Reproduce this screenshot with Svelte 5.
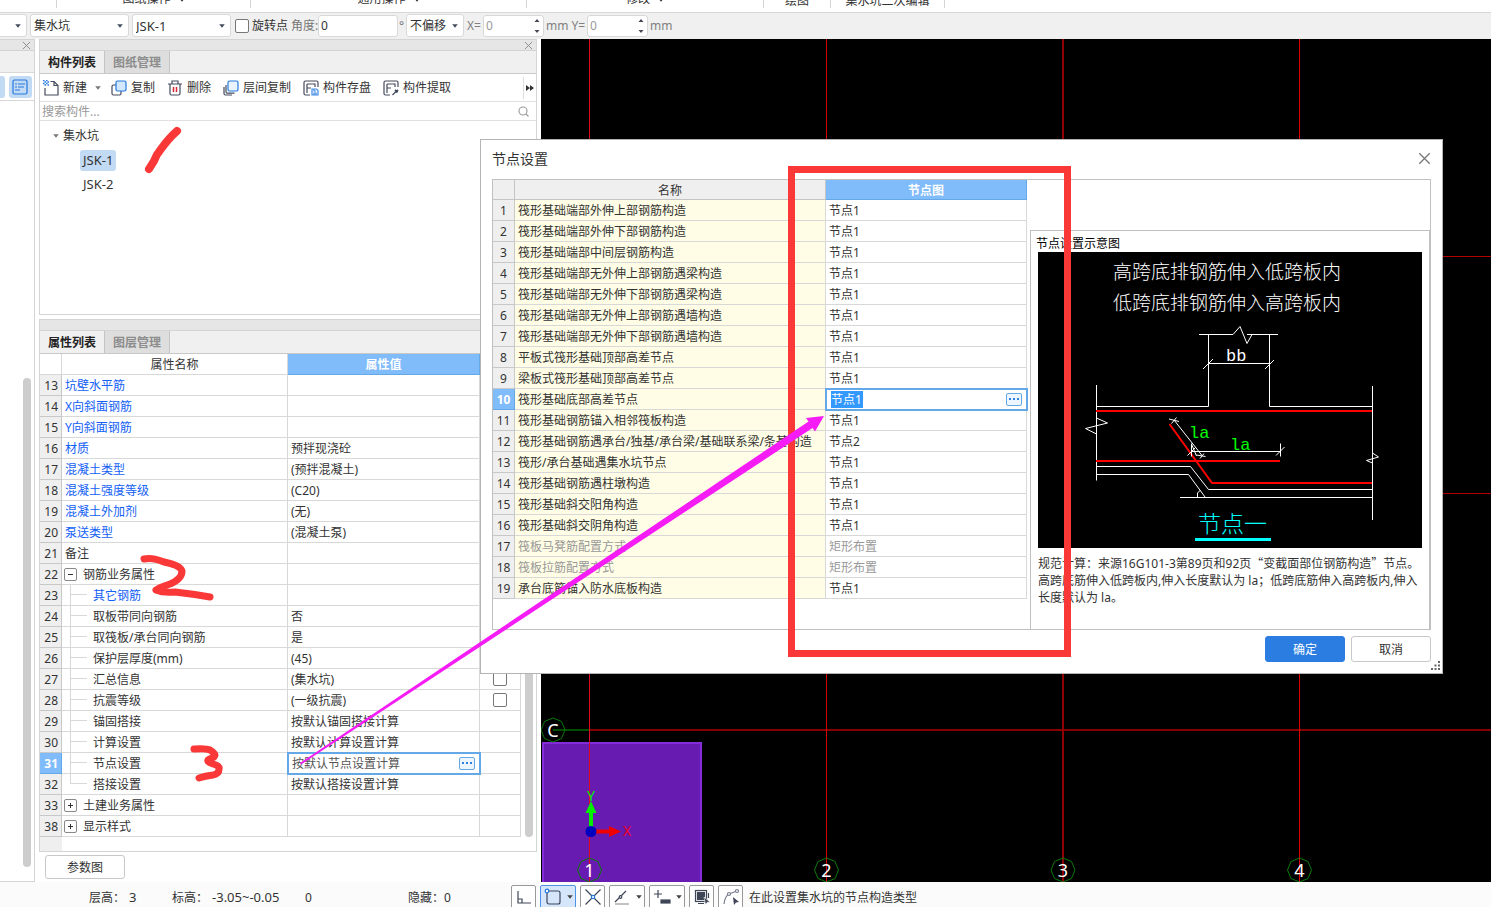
<script>
  const ribbon = [
    { text: '', width: 57 },
    { text: '图纸操作', width: 194, menu: true },
    { text: '通用操作', width: 276, menu: true },
    { text: '修改', width: 237, menu: true },
    { text: '绘图', width: 67 },
    { text: '集水坑二次编辑', width: 114 }
  ];

  const properties = [
    { no: 13, name: '坑壁水平筋', blue: true },
    { no: 14, name: 'X向斜面钢筋', blue: true },
    { no: 15, name: 'Y向斜面钢筋', blue: true },
    { no: 16, name: '材质', value: '预拌现浇砼', blue: true },
    { no: 17, name: '混凝土类型', value: '(预拌混凝土)', blue: true },
    { no: 18, name: '混凝土强度等级', value: '(C20)', blue: true },
    { no: 19, name: '混凝土外加剂', value: '(无)', blue: true },
    { no: 20, name: '泵送类型', value: '(混凝土泵)', blue: true },
    { no: 21, name: '备注' },
    { no: 22, name: '钢筋业务属性', group: '−' },
    { no: 23, name: '其它钢筋', blue: true, child: true },
    { no: 24, name: '取板带同向钢筋', value: '否', child: true },
    { no: 25, name: '取筏板/承台同向钢筋', value: '是', child: true },
    { no: 26, name: '保护层厚度(mm)', value: '(45)', child: true },
    { no: 27, name: '汇总信息', value: '(集水坑)', child: true, check: true },
    { no: 28, name: '抗震等级', value: '(一级抗震)', child: true, check: true },
    { no: 29, name: '锚固搭接', value: '按默认锚固搭接计算', child: true },
    { no: 30, name: '计算设置', value: '按默认计算设置计算', child: true },
    { no: 31, name: '节点设置', value: '按默认节点设置计算', child: true, active: true },
    { no: 32, name: '搭接设置', value: '按默认搭接设置计算', child: true, last: true },
    { no: 33, name: '土建业务属性', group: '+' },
    { no: 38, name: '显示样式', group: '+' }
  ];

  const nodes = [
    ['筏形基础端部外伸上部钢筋构造', '节点1'],
    ['筏形基础端部外伸下部钢筋构造', '节点1'],
    ['筏形基础端部中间层钢筋构造', '节点1'],
    ['筏形基础端部无外伸上部钢筋遇梁构造', '节点1'],
    ['筏形基础端部无外伸下部钢筋遇梁构造', '节点1'],
    ['筏形基础端部无外伸上部钢筋遇墙构造', '节点1'],
    ['筏形基础端部无外伸下部钢筋遇墙构造', '节点1'],
    ['平板式筏形基础顶部高差节点', '节点1'],
    ['梁板式筏形基础顶部高差节点', '节点1'],
    ['筏形基础底部高差节点', '节点1'],
    ['筏形基础钢筋锚入相邻筏板构造', '节点1'],
    ['筏形基础钢筋遇承台/独基/承台梁/基础联系梁/条基构造', '节点2'],
    ['筏形/承台基础遇集水坑节点', '节点1'],
    ['筏形基础钢筋遇柱墩构造', '节点1'],
    ['筏形基础斜交阳角构造', '节点1'],
    ['筏形基础斜交阴角构造', '节点1'],
    ['筏板马凳筋配置方式', '矩形布置'],
    ['筏板拉筋配置方式', '矩形布置'],
    ['承台底筋锚入防水底板构造', '节点1']
  ];

  const axes = [
    { x: 48.5, color: '#e00a20', width: 1 },
    { x: 285.5, color: '#d80000', width: 1 },
    { x: 522, color: '#900000', width: 2 },
    { x: 758.5, color: '#e00000', width: 1 }
  ];
</script>

{#snippet caret()}
  <svg class="caret" width="6" height="4" viewBox="0 0 6 4" aria-hidden="true"><path d="M0.200 0.200h5.600L3 3.800z" fill="currentColor" /></svg>
{/snippet}

{#snippet cross(size)}
  <svg width={size} height={size} viewBox="0 0 10 10" aria-hidden="true"><path d="M1 1l8 8M9 1l-8 8" stroke="currentColor" stroke-width="1" fill="none" /></svg>
{/snippet}

{#snippet dots()}
  <button class="more" aria-label="更多"><i></i><i></i><i></i></button>
{/snippet}

{#snippet spin()}
  <svg width="6" height="14" viewBox="0 0 6 14" aria-hidden="true"><path d="M0.500 3L3 0l2.500 3zM0.500 11h5L3 14z" fill="#444a55" /></svg>
{/snippet}

<div class="app">
  <header class="ribbon">
    {#each ribbon as g}
      <div class="ribbon-group" class:menu={g.menu} style:width="{g.width}px">
        <span>{g.text}</span>
        {#if g.menu}<span class="rc">{@render caret()}</span>{/if}
      </div>
    {/each}
  </header>

  <div class="toolbar">
    <label class="combo first"><select aria-label="楼层"><option></option></select>{@render caret()}</label>
    <label class="combo wide"><select aria-label="构件类型"><option>集水坑</option></select>{@render caret()}</label>
    <label class="combo wide latin"><select aria-label="构件"><option>JSK-1</option></select>{@render caret()}</label>
    <label class="tick"><input type="checkbox" />旋转点</label>
    <label class="angle"><span>角度:</span><input value="0" /></label>
    <span class="deg">°</span>
    <label class="combo offset"><select aria-label="偏移方式"><option>不偏移</option></select>{@render caret()}</label>
    <label class="num"><span>X=</span><span class="spin"><input value="0" />{@render spin()}</span><span>mm</span></label>
    <label class="num"><span>Y=</span><span class="spin"><input value="0" />{@render spin()}</span><span>mm</span></label>
  </div>

  <main>
    <aside class="strip">
      <div class="titlebar">{@render cross(9)}</div>
      <div class="strip-head"></div>
      <div class="strip-tools">
        <button class="cut" aria-label="视图"></button>
        <button aria-label="列表">
          <svg width="16" height="16" viewBox="0 0 16 16" fill="none" stroke="#2478e0" stroke-width="1.200"><rect x="1" y="1" width="14" height="14" rx="1.500" /><path d="M3 5h2M6 5h7M3 8h2M6 8h6M3 11h5" /></svg>
        </button>
      </div>
      <div class="strip-body"><div class="thumb"></div></div>
    </aside>

    <div class="dock">
      <section class="panel components">
        <div class="titlebar">{@render cross(9)}</div>
        <div class="tabs"><button class="on">构件列表</button><button>图纸管理</button></div>
        <div class="tools">
          <button>
            <svg width="16" height="16" viewBox="0 0 16 16" fill="none" stroke="#444b5c" stroke-width="1.200"><path d="M7.500 1.500h3.500l4 4v9.500H2V8M11 1.500v4h4" /><path d="M0 .5h1.500M3 .5h1.500M1.500 2H3M4.500 2H6M0 3.500h1.500M3 3.500h1.500M1.500 5H3M4.500 5H6" stroke="#2478e0" stroke-width="1.500" /></svg>
            新建
            <span class="gray">{@render caret()}</span>
          </button>
          <button>
            <svg width="16" height="16" viewBox="0 0 16 16" stroke-width="1.200"><path d="M5 5H2.500Q1 5 1 6.500v7Q1 15 2.500 15h6q1.500 0 1.500-1.500V11" fill="none" stroke="#444b5c" /><rect x="5" y="1" width="10" height="10" rx="1.500" fill="#d3e7fd" stroke="#2478e0" /></svg>
            复制
          </button>
          <button>
            <svg width="16" height="16" viewBox="0 0 16 16" fill="none" stroke="#444b5c" stroke-width="1.200"><path d="M1 4h14M5 4V1h6v3M3 4v9.500Q3 15 4.500 15h7q1.500 0 1.500-1.500V4" /><path d="M6.500 7v5M9.500 7v5" stroke="#df2530" stroke-width="1.500" /></svg>
            删除
          </button>
          <button>
            <svg width="16" height="16" viewBox="0 0 16 16" stroke-width="1.200" fill="none"><path d="M1 7v6.500Q1 15 2.500 15H9" stroke="#444b5c" /><path d="M3 5v7q0 1.200 1.200 1.200H11.500" stroke="#444b5c" /><rect x="5" y="1" width="10" height="10" rx="1.500" fill="#eaf4fe" stroke="#2478e0" /></svg>
            层间复制
          </button>
          <button>
            <svg width="16" height="16" viewBox="0 0 16 16" fill="none" stroke="#444b5c" stroke-width="1.200"><path d="M7 15H2.500Q1 15 1 13.500V2.500Q1 1 2.500 1h11Q15 1 15 2.500V7M4 4v9M4 8h4M4 4h8v3" /><path d="M9 9h4.500L15 10.500V15H9zM11 9v2h2M11 15v-2h2v2" stroke="#3f89e6" /></svg>
            构件存盘
          </button>
          <button>
            <svg width="16" height="16" viewBox="0 0 16 16" fill="none" stroke="#444b5c" stroke-width="1.200"><path d="M7 15H2.500Q1 15 1 13.500V2.500Q1 1 2.500 1h11Q15 1 15 2.500V7M4 4v9M4 8h4M4 4h8v3" /><path d="M9.500 15l3.500-3.500" /><path d="M12 10l2.500 2.500M13.500 11.500L15 10" stroke-width="1.800" /></svg>
            构件提取
          </button>
          <button class="overflow" aria-label="更多工具"><svg width="8" height="6" viewBox="0 0 8 6" fill="#333"><path d="M0 0l4 3-4 3zM4 0l4 3-4 3z" /></svg></button>
        </div>
        <label class="search">
          <input placeholder="搜索构件..." aria-label="搜索构件" />
          <svg width="11" height="11" viewBox="0 0 11 11" fill="none" stroke="#999" stroke-width="1.100"><circle cx="5" cy="5" r="4" /><path d="M8 8l2.500 2.500" /></svg>
        </label>
        <ul class="tree">
          <li class="root"><span class="gray">{@render caret()}</span>集水坑</li>
          <li><span class="leaf picked">JSK-1</span></li>
          <li><span class="leaf">JSK-2</span></li>
        </ul>
      </section>

      <section class="panel props">
        <div class="titlebar"></div>
        <div class="tabs"><button class="on">属性列表</button><button>图层管理</button></div>
        <div class="grid-area">
          <table class="grid prop-grid">
            <colgroup><col class="c-no" /><col class="c-name" /><col class="c-value" /><col class="c-check" /></colgroup>
            <thead><tr><th class="blank"></th><th class="plain">属性名称</th><th class="hot">属性值</th><th class="plain"></th></tr></thead>
            <tbody>
              {#each properties as p}
                <tr>
                  <th class:sel={p.active}>{p.no}</th>
                  <td class:blue={p.blue} class:child={p.child} class:last={p.last}>
                    {#if p.group}<button class="fold" aria-label={p.name}><svg width="7" height="7" viewBox="0 0 7 7"><path d={p.group === '+' ? 'M1 3.500h5M3.500 1v5' : 'M1 3.500h5'} stroke="#333" /></svg></button>{/if}{p.name}
                  </td>
                  {#if p.active}
                    <td class="edit"><div><input value={p.value} aria-label={p.name} />{@render dots()}</div></td>
                  {:else}
                    <td>{p.value ?? ''}</td>
                  {/if}
                  <td class="mark">{#if p.check}<input type="checkbox" aria-label={p.name} />{/if}</td>
                </tr>
              {/each}
            </tbody>
          </table>
          <div class="track"><div class="thumb"></div></div>
          <div class="gutter-end"></div>
        </div>
      </section>
      <div class="dock-foot"><button>参数图</button></div>
    </div>

    <div class="canvas">
      <svg width="100%" height="100%" aria-label="绘图区">
        <path d="M48 217.500h2000M48 454.500h2000" stroke="#b00000" />
        <path d="M48 691h2000" stroke="#850000" stroke-width="2" />
        <path d="M12 691h37" stroke="#004d00" stroke-width="2" />
        <rect x="2" y="704" width="158" height="160" fill="#671bb1" stroke="#842bdc" stroke-width="2" />
        {#each axes as a, i}
          <path d="M{a.x} 0V843" stroke={a.color} stroke-width={a.width} />
          <path d="M{a.x} 819l8.500 3.500 3.500 8.500-3.500 8.500-8.500 3.500-8.500-3.500-3.500-8.500 3.500-8.500z" fill="none" stroke="#0a7a0a" />
          <text x={a.x} y="838" text-anchor="middle">{i + 1}</text>
        {/each}
        <path d="M12 679l8.500 3.500 3.500 8.500-3.500 8.500-8.500 3.500-8.500-3.500-3.500-8.500 3.500-8.500z" fill="none" stroke="#0a7a0a" />
        <text x="12" y="698" text-anchor="middle">C</text>
        <path d="M48 791V774h-3.500L50 762l5.500 12H52v17z" fill="#00f000" />
        <path d="M54 790.500h14V787l12 5.500-12 5.500v-3.500H54z" fill="#f00000" />
        <circle cx="50" cy="792.500" r="5.500" fill="#0000c0" />
        <text class="ax" x="50" y="762" text-anchor="middle">Y</text>
        <text class="ax ax-x" x="86" y="797" text-anchor="middle">X</text>
      </svg>
    </div>
  </main>

  <footer class="status">
    <span class="pair height"><span>层高：</span><span class="latin">3</span></span>
    <span class="pair level"><span>标高：</span><span class="latin">-3.05~-0.05</span></span>
    <span class="zero">0</span>
    <span class="hidden-count">隐藏：0</span>
    <div class="snaps">
      <button aria-label="正交"><svg width="18" height="18" viewBox="0 0 18 18" fill="none" stroke="#3f4658" stroke-width="1.200"><path d="M3 3v12h13M3 11h4v4" /></svg></button>
      <button class="lit" aria-label="矩形捕捉"><svg width="18" height="18" viewBox="0 0 18 18" fill="none" stroke="#3f4658" stroke-width="1.200"><rect x="3" y="3" width="13" height="13" rx="2" /><circle cx="3" cy="3" r="1.800" fill="#fff" stroke="#2478e0" /></svg>{@render caret()}</button>
      <button aria-label="交点"><svg width="18" height="18" viewBox="0 0 18 18" fill="none" stroke="#3f4658" stroke-width="1.200"><path d="M1.500 1.500l15 15M16.500 1.500l-15 15" /><circle cx="9" cy="9" r="1.700" fill="#fff" stroke="#2478e0" /></svg></button>
      <button aria-label="角度"><svg width="18" height="18" viewBox="0 0 18 18" fill="none" stroke="#3f4658" stroke-width="1.200"><path d="M13 3L2 14" /><path d="M2 16h14" stroke="#999" /><circle cx="7.500" cy="9" r="1.300" fill="#fff" /></svg>{@render caret()}</button>
      <button aria-label="动态输入"><svg width="18" height="18" viewBox="0 0 18 18" fill="none" stroke="#3f4658" stroke-width="1.200"><path d="M1 6h8M5 2v8" /><rect x="8" y="12" width="9" height="3" fill="#3f4658" /></svg>{@render caret()}</button>
      <button aria-label="选择"><svg width="18" height="18" viewBox="0 0 18 18" fill="none" stroke="#3f4658" stroke-width="1.200"><rect x="2.500" y="2.500" width="11" height="11" /><rect x="4.500" y="4.500" width="7" height="7" fill="#3f4658" /><path d="M5 15.500h6M15.500 5v5" /><path d="M11 9l6 5-3 .5-1.500 2.500z" fill="#3f4658" stroke="#fff" stroke-width=".6" /></svg></button>
      <button aria-label="折线"><svg width="18" height="18" viewBox="0 0 18 18" fill="none" stroke="#777e8c" stroke-width="1.200"><path d="M2 16Q3 8 7 6L15 3" /><circle cx="7" cy="6" r="1.500" fill="#fff" /><circle cx="15" cy="3" r="1.500" fill="#fff" /><path d="M11 9l6 5-3 .5-2 2.500z" fill="#3f4658" stroke="none" /></svg></button>
    </div>
    <span class="hint">在此设置集水坑的节点构造类型</span>
  </footer>

  <div class="dialog" role="dialog" aria-label="节点设置">
    <div class="dialog-title"><span>节点设置</span><button aria-label="关闭">{@render cross(13)}</button></div>
    <div class="dialog-body">
      <table class="grid node-grid">
        <colgroup><col class="c-no" /><col class="n-name" /><col class="n-value" /></colgroup>
        <thead><tr><th></th><th>名称</th><th class="hot">节点图</th></tr></thead>
        <tbody>
          {#each nodes as n, i}
            <tr class:off={i === 16 || i === 17}>
              <th class:sel={i === 9}>{i + 1}</th>
              <td class="cream">{n[0]}</td>
              {#if i === 9}
                <td class="edit"><div><input class="chosen" value={n[1]} aria-label={n[0]} />{@render dots()}</div></td>
              {:else}
                <td>{n[1]}</td>
              {/if}
            </tr>
          {/each}
        </tbody>
      </table>
      <div class="preview">
        <div class="caption">节点设置示意图</div>
        <svg class="detail" viewBox="0 0 384 296" fill="none" stroke="#fff">
          <rect width="384" height="296" fill="#000" stroke="none" />
          <g fill="#fff" stroke="none" class="song">
            <text x="75" y="27">高跨底排钢筋伸入低跨板内</text>
            <text x="75" y="58">低跨底排钢筋伸入高跨板内</text>
          </g>
          <path d="M161 82.500h34l7-8 7 17 5-9M209 82.500h31M170.500 82v72.500H58.500M231.500 82v72.500H334.500" />
          <path d="M170 111.500h62M165 117l10-10M227 117l9-9" />
          <path d="M58.500 133v95.500M58.500 166l11 5-22 5.500 11 5.500M334.500 134v134M334.500 201l6 4-12 3.500 6 2.500" />
          <path d="M58 214.500h94.500l18 23h164M58 222.500h92.500l16.500 22.500M142 245.500h192M159.500 245v-4l3-3" />
          <g stroke="#f00" stroke-width="2"><path d="M58 159h276M58 209h184M131.500 172l42.500 59h160" /></g>
          <path d="M136 168l28 35.500M131 167l10 2.500M133.500 171.500l5-6M158.500 203l9 1.500M162 206.500l4-5M153.500 199.500h89M153.500 191.500v13M242.500 191.500v13M238 203.500l8.500-8.500M149.500 203.500l8-8M153.500 192l5 12" />
          <g stroke="none" class="mono">
            <text x="188" y="109" fill="#fff">bb</text>
            <text x="151" y="186" fill="#0f0">la</text>
            <text x="192" y="198" fill="#0f0">la</text>
          </g>
          <text class="big" x="160" y="280" fill="#0ff" stroke="none">节点一</text>
          <path d="M157 287.500h76" stroke="#0ff" stroke-width="3" />
        </svg>
        <p>规范计算：来源16G101-3第89页和92页<span class="q">“</span>变截面部位钢筋构造<span class="q">”</span>节点。<br />高跨底筋伸入低跨板内,伸入长度默认为 la；低跨底筋伸入高跨板内,伸入长度默认为 la。</p>
      </div>
    </div>
    <div class="dialog-foot">
      <button class="ok">确定</button><button>取消</button>
    </div>
    <svg class="grip" width="9" height="9" viewBox="0 0 9 9" fill="#666"><path d="M7 0h2v2H7zM3.500 3.500h2v2h-2zM7 3.500h2v2H7zM0 7h2v2H0zM3.500 7h2v2h-2zM7 7h2v2H7z" /></svg>
  </div>

  <svg class="notes" aria-hidden="true">
    <rect x="791.500" y="169.500" width="276" height="484" fill="none" stroke="#fb3838" stroke-width="7" />
    <g fill="none" stroke="#fb3838" stroke-width="8" stroke-linecap="round" stroke-linejoin="round">
      <path d="M177 131Q169 138 161 149Q156 155 154 161L149 169" />
      <path stroke-width="7" d="M144 559Q152 557 164 562Q180 565 182 571Q182 579 170 584Q158 588 156 590Q163 593 175 592Q193 594 210 597" />
      <path stroke-width="7" d="M194 749Q206 748 210 750Q217 754 214 757L208 760Q207 762 213 764Q220 766 219 769Q219 774 213 775Q205 776 199 778" />
    </g>
    <path d="M300 763L808.500 421.500 806 418 824 416 815 431.500 812.500 428 301 764.500z" fill="#f51cf5" />
  </svg>
</div>

<style>
  :global(body) { margin: 0; background: #fff; }
  .app, .app * { box-sizing: border-box; }
  .app {
    position: relative; display: flex; flex-direction: column; min-height: 100vh; overflow: hidden;
    font: 12px/16px "Noto Sans", "Noto Sans CJK SC", sans-serif; color: #333;
  }
  button, input, select { font: inherit; color: inherit; margin: 0; padding: 0; border: 0; background: none; outline: 0; min-width: 0; }
  svg { flex: none; display: block; }
  input[type="checkbox"] { appearance: none; width: 14px; height: 14px; border: 1px solid #777; border-radius: 2px; background: #fff; }
  .latin { font-size: 13px; }

  .ribbon { display: flex; height: 13px; padding-bottom: 5px; border-bottom: 1px solid #d8d8d8; overflow: hidden; }
  .ribbon-group { display: flex; align-items: flex-end; justify-content: center; gap: 8px; height: 8px; border-right: 1px solid #d5d5d5; white-space: nowrap; line-height: 14px; }
  .ribbon-group.menu { padding-bottom: 2px; }
  .rc { padding-bottom: 4px; line-height: 0; }

  .toolbar { display: flex; align-items: center; height: 26px; gap: 3px; background: #f0f0f0; padding-bottom: 1px; white-space: nowrap; }
  .combo { display: flex; align-items: center; height: 23px; padding: 0 5px 0 3px; background: #fff; border: 1px solid #d9d9d9; border-radius: 3px; color: #444b5c; }
  .combo select { appearance: none; flex: 1; color: #333; }
  .combo.wide { width: 99px; }
  .combo.first { width: 27px; border-left: 0; border-radius: 0 3px 3px 0; }
  .combo.offset { width: 58px; }
  .tick { display: flex; align-items: center; gap: 3px; padding-left: 1px; }
  .angle { display: flex; align-items: center; color: #777; }
  .angle span { width: 27px; }
  .angle input { width: 80px; height: 22px; padding-left: 2px; background: #fff; border: 1px solid #d9d9d9; border-radius: 3px; color: #333; }
  .deg { width: 4px; margin-left: -2px; color: #777; }
  .num { display: flex; align-items: center; gap: 2px; color: #808080; }
  .spin { display: flex; align-items: center; width: 61px; height: 22px; padding: 0 3px 0 2px; background: #fff; border: 1px solid #d9d9d9; border-radius: 3px; }
  .spin input { flex: 1; width: 10px; color: #999; }

  main { display: flex; flex: 1; }
  .titlebar { display: flex; align-items: center; justify-content: flex-end; height: 11px; padding-right: 3px; background: #e6e6e6; border-bottom: 1px solid #d4d4d4; color: #888; }
  .strip { display: flex; flex-direction: column; width: 35px; margin-right: 4px; border: 1px solid #d4d4d4; border-left: 0; }
  .strip-head { height: 22px; background: #f0f0f0; border-bottom: 1px solid #d8d8d8; }
  .strip-tools { display: flex; gap: 4px; height: 28px; padding: 3px 2px 2px 0; border-bottom: 1px solid #d8d8d8; }
  .strip-tools button { display: grid; place-items: center; width: 24px; border-radius: 3px; background: #c2daf3; }
  .strip-tools .cut { width: 5px; border-radius: 0 3px 3px 0; }
  .strip-body { flex: 1; padding: 277px 3px 14px; display: flex; justify-content: flex-end; }
  .thumb { width: 8px; border-radius: 4px; background: #cdcdcd; }

  .dock { display: flex; flex-direction: column; width: 498px; margin-right: 4px; }
  .panel { display: flex; flex-direction: column; border: 1px solid #d4d4d4; }
  .components { flex: 1; margin-bottom: 4px; }
  .tabs { display: flex; height: 23px; background: #f0f0f0; border-bottom: 1px solid #c8c8c8; }
  .tabs button { width: 65px; padding-top: 2px; border: solid #c4c4c8; border-width: 0 1px 0 0; background: #dedede; color: #8c8c8c; font-weight: 700; }
  .tabs .on { background: #f0f0f0; color: #222; }
  .tools { display: flex; align-items: center; gap: 12px; height: 28px; padding: 1px 0 0 3px; border-bottom: 1px solid #e0e0e0; white-space: nowrap; }
  .tools button { display: flex; align-items: center; gap: 4px; height: 22px; }
  .tools button:first-child { margin-right: -2px; }
  .gray { color: #777; }
  .tools .gray { padding-left: 4px; }
  .tools .overflow { margin-left: auto; padding: 0 2px; border-left: 1px solid #ddd; }
  .search { display: flex; align-items: center; height: 19px; padding: 1px 7px 0 2px; border-bottom: 1px solid #e0e0e0; }
  .search input { flex: 1; }
  .search input::placeholder { color: #999; opacity: 1; }
  .tree { list-style: none; margin: 0; padding: 3px 0 0 13px; }
  .tree li { display: flex; align-items: center; height: 24px; gap: 4px; padding-left: 27px; }
  .tree .root { padding-left: 0; }
  .leaf { padding: 2px 3px 3px; border-radius: 3px; font-size: 13px; }
  .picked { background: #c2daf3; }

  .grid { border-collapse: separate; border-spacing: 0; table-layout: fixed; }
  .grid td, .grid th { height: 21px; padding: 2px 3px 0; line-height: 16px; border: solid #d8d8d8; border-width: 0 1px 1px 0; text-align: left; white-space: nowrap; overflow: hidden; font-weight: 400; }
  .grid tbody th { padding: 2px 3px 0 0; text-align: right; background: #efefef; border-color: #c8c8c8; }
  .grid thead th { text-align: center; background: #efefef; border-color: #c4c4c4; }
  .grid thead .blank, .grid thead .plain { background: #fff; border-color: #d8d8d8; }
  .grid thead .hot { background: #80bbfa; color: #fff; border-color: #65a8e8; font-weight: 700; }
  .grid tbody .sel { background: #80bbfa; color: #fff; font-weight: 700; border-color: #65a8e8; }
  .c-no { width: 22px; }
  .c-name { width: 226px; }
  .c-value { width: 192px; }
  .c-check { width: 41px; }
  .prop-grid { width: 481px; }
  .grid .blue { color: #1260f5; }
  .grid td.child { padding-left: 31px; background: linear-gradient(#d8d8d8, #d8d8d8) 8px 0 / 1px 100% no-repeat, linear-gradient(#d8d8d8, #d8d8d8) 8px 9px / 17px 1px no-repeat; }
  .grid td.last { background-size: 1px 10px, 17px 1px; }
  .fold { display: inline-grid; place-items: center; width: 13px; height: 13px; margin: 0 6px 0 -1px; border: 1px solid #888; border-radius: 2px; vertical-align: 1px; }
  .grid .mark { padding-top: 0; text-align: center; }
  .mark input { display: block; margin: 0 auto; }
  .grid td.edit { outline: 2px solid #65a8e8; outline-offset: -1px; padding: 0 4px; background: #fff; }
  .edit div { display: flex; align-items: center; justify-content: space-between; height: 19px; }
  .edit input { width: 150px; height: 17px; color: #555; }
  .edit .chosen { width: 32px; margin-left: 1px; background: #3399ff; color: #fff; }
  .more { display: flex; align-items: center; justify-content: center; gap: 2px; width: 16px; height: 13px; border: 1px solid #65a8e8; border-radius: 2px; background: #edf5fe; }
  .more i { width: 2px; height: 2px; background: #2f7fe0; }
  .grid-area { display: grid; grid-template-columns: 481px 1fr; }
  .track { display: flex; justify-content: flex-end; padding: 21px 3px 0 0; }
  .gutter-end { width: 22px; height: 14px; background: #efefef; }
  .dock-foot { height: 30px; padding: 3px 6px; }
  .dock-foot button { width: 80px; height: 24px; padding-top: 1px; border: 1px solid #c8c8c8; border-radius: 3px; background: #fff; }

  .canvas { flex: 1; position: relative; background: #000; overflow: hidden; }
  .canvas svg { position: absolute; inset: 0; }
  .canvas text { font-size: 18px; fill: #fff; }
  .canvas .ax { font-size: 14px; fill: #00f000; }
  .canvas .ax-x { fill: #f00020; }

  .status { display: flex; align-items: flex-start; height: 25px; overflow: hidden; background: #fbfbfb; white-space: nowrap; line-height: 31px; }
  .pair { display: flex; gap: 4px; }
  .height { width: 172px; padding-left: 89px; }
  .level { width: 133px; }
  .zero { width: 103px; }
  .hidden-count { width: 103px; }
  .snaps { display: flex; gap: 4px; padding-top: 3px; }
  .snaps button { display: flex; align-items: center; justify-content: center; gap: 5px; width: 25px; height: 24px; border: 1px solid #999; border-radius: 2px; background: #fff; color: #444; }
  .snaps button:has(:global(.caret)) { width: 36px; }
  .snaps .lit { background: #d5e6fb; border-color: #4b92e8; }
  .hint { padding-left: 6px; }

  .dialog { position: absolute; left: 480px; top: 139px; width: 963px; background: #fff; border: 1px solid #b4b4b4; }
  .dialog-title { display: flex; align-items: center; justify-content: space-between; height: 39px; padding: 0 11px 2px; font-size: 14px; }
  .dialog-title button { color: #777; }
  .dialog-body { display: flex; align-items: flex-start; margin: 0 11px; border: 1px solid #c0c0c0; }
  .node-grid { width: 534px; }
  .node-grid thead th { height: 20px; }
  .node-grid tbody th { padding: 2px 0 0; text-align: center; }
  .n-name { width: 311px; }
  .n-value { width: 201px; }
  .grid .cream { background: #fffde5; }
  .off td { color: #999; }
  .preview { flex: 1; margin: 50px 0 0 3px; padding: 5px 7px 23px; border: solid #c0c0c0; border-width: 1px 1px 0; }
  .caption { margin-left: -2px; height: 16px; color: #000; }
  .detail { width: 100%; height: auto; }
  .song { font-size: 19px; font-weight: 300; }
  .big { font-size: 23px; font-weight: 300; }
  .mono { font: 17px "Liberation Mono", monospace; }
  .preview p { margin: 6px -2px 0 0; line-height: 17px; }
  .q { font-family: "Noto Sans CJK SC", sans-serif; }
  .dialog-foot { display: flex; justify-content: flex-end; gap: 6px; padding: 6px 11px 11px; }
  .dialog-foot button { width: 80px; height: 26px; padding-top: 1px; border: 1px solid #c8c8c8; border-radius: 3px; background: #fff; }
  .dialog-foot .ok { background: #2b7de1; border-color: #2b7de1; color: #fff; }
  .grip { position: absolute; right: 2px; bottom: 3px; }

  .notes { position: absolute; inset: 0; width: 100%; height: 100%; pointer-events: none; }
</style>
